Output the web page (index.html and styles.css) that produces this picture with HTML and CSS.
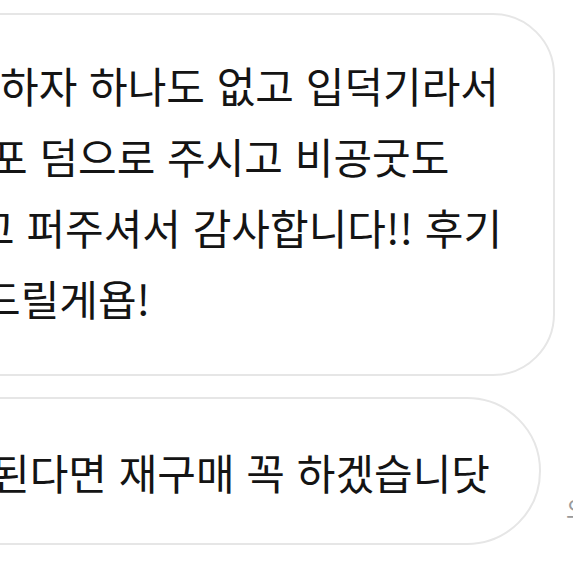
FILE: index.html
```html
<!DOCTYPE html>
<html lang="ko">
<head>
    <meta charset="UTF-8">
    <meta name="viewport" content="width=device-width, initial-scale=1.0">
    <title>채팅</title>
    <link rel="stylesheet" href="styles.css">
</head>
<body>
    <div class="chat">
        <div class="msg-row first">
            <div class="bubble tall">
                <div class="line">하자 하나도 없고 입덕기라서</div>
                <div class="line cut-a">포 덤으로 주시고 비공굿도</div>
                <div class="line cut-b">고 퍼주셔서 감사합니다!! 후기</div>
                <div class="line cut-c">드릴게욥!</div>
            </div>
        </div>
        <div class="msg-row second">
            <div class="bubble pill">
                <div class="line cut-d">된다면 재구매 꼭 하겠습니닷</div>
            </div>
            <span class="time">오후 3:41</span>
        </div>
    </div>
</body>
</html>
```

FILE: styles.css
```css
html, body {
    margin: 0;
    padding: 0;
    background-color: #ffffff;
    overflow: hidden;
}
body {
    width: 573px;
    height: 573px;
    font-family: "Noto Sans CJK KR", "Noto Sans", sans-serif;
    color: #141414;
}
.chat {
    padding-top: 13px;
}
.msg-row {
    display: flex;
    align-items: flex-end;
    margin-left: -60px;
}
.msg-row.first {
    margin-right: 18px;
}
.msg-row.second {
    margin-top: 21px;
    gap: 25px;
}
.bubble {
    background-color: #ffffff;
    border: 2px solid #e6e6e6;
    box-sizing: border-box;
    padding-left: 60px;
    font-size: 42px;
    line-height: 71px;
    white-space: nowrap;
}
.bubble.tall {
    flex: 1;
    height: 363px;
    padding-top: 34px;
    border-radius: 0 62px 62px 0;
}
.bubble.pill {
    flex-shrink: 0;
    width: 601px;
    height: 148px;
    display: flex;
    align-items: center;
    border-radius: 0 74px 74px 0;
}
.line {
    text-indent: -2px;
}
.line.cut-a {
    text-indent: -13px;
}
.line.cut-b {
    text-indent: -26px;
}
.line.cut-c {
    text-indent: -20px;
}
.line.cut-d {
    text-indent: -11px;
}
.time {
    flex-shrink: 0;
    font-size: 24px;
    color: #9a9a9a;
    padding-bottom: 20px;
}
```
